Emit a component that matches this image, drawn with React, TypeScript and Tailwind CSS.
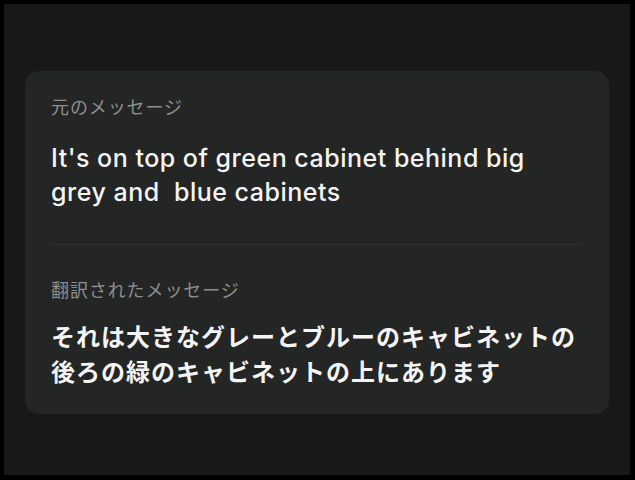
import React from "react";

const JP = "font-['Noto_Sans','Noto_Sans_CJK_JP',sans-serif]";

function Section({ label, children }: { label: string; children: React.ReactNode }) {
  return (
    <div className="flex flex-col">
      <div className="text-[18px] leading-[24px] tracking-[0.9px] text-[#8d8e8e]">{label}</div>
      {children}
    </div>
  );
}

export default function App() {
  return (
    <div className="h-[480px] w-[635px] bg-black pt-[4px] pl-[4px] pr-[5px] pb-[5px]">
      <div className={`flex h-full w-full flex-col bg-[#181818] px-[21px] pt-[67px] ${JP}`}>
        <div className="flex h-[343px] flex-col rounded-[14px] bg-[#242525] px-[26px] pt-[24px]">
          <Section label="元のメッセージ">
            <p className="mt-[22px] text-[25px] font-medium leading-[34px] tracking-[0.5px] text-[#f4f4f4] font-['Inter','Noto_Sans_CJK_JP',sans-serif]">
              It's on top of green cabinet behind big grey and&nbsp; blue cabinets
            </p>
          </Section>
          <div className="mt-[35px] h-px w-full bg-[#2f3030]" />
          <div className="mt-[33px]">
            <Section label="翻訳されたメッセージ">
              <p className="mt-[17px] text-[24px] font-bold leading-[35px] tracking-[1px] text-[#f4f4f4]">
                それは大きなグレーとブルーのキャビネットの後ろの緑のキャビネットの上にあります
              </p>
            </Section>
          </div>
        </div>
      </div>
    </div>
  );
}
